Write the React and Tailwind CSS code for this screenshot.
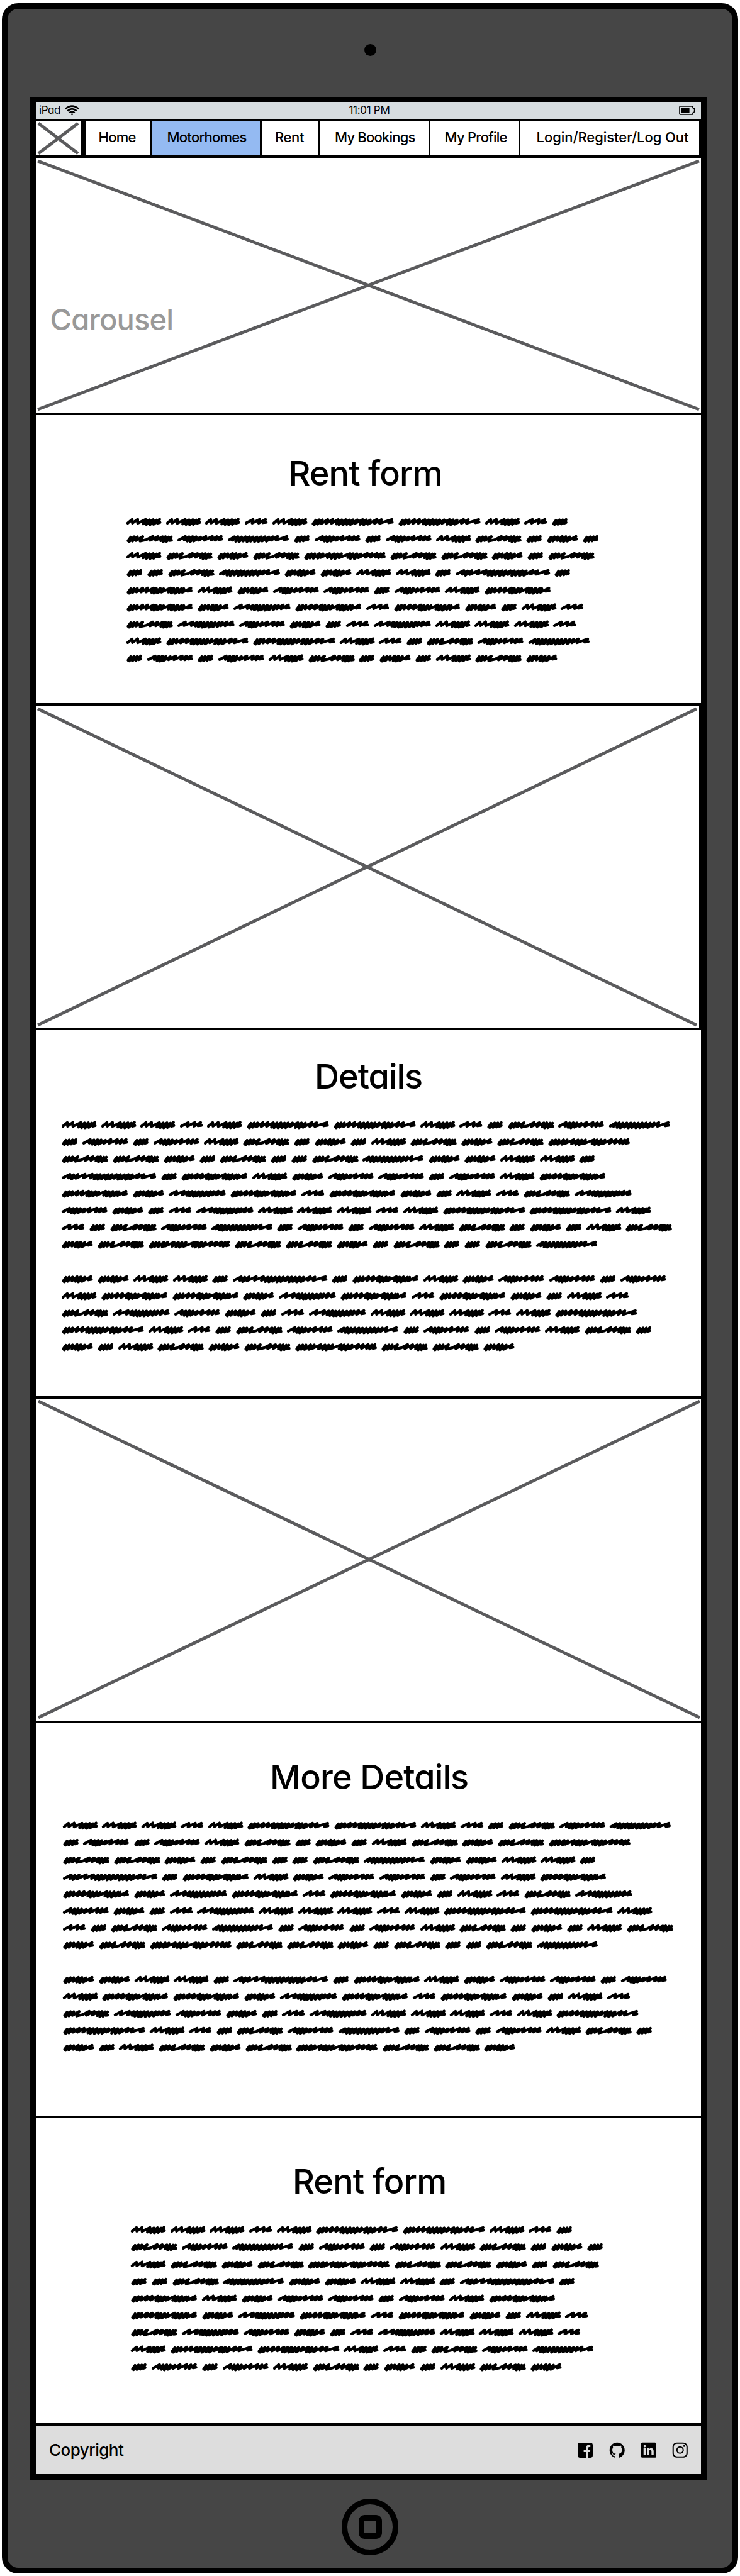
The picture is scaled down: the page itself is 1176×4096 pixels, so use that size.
import React from "react";
import { IoLogoGithub, IoLogoLinkedin, IoLogoInstagram } from "react-icons/io5";

// Scribbled words: [advance width, pen path], drawn on a 44-unit-high line.
const WORDS = {
  a: [114, "9,31 23,11 15,35 42,9 33,34 60,9 52,32 79,7 68,28 79,24"],
  b: [153, "7,27 46,7 41,27 82,7 77,27 115,7 100,25 119,23"],
  c: [218, "7,27 31,7 33,27 62,6 62,28 106,7 92,32 127,9 110,35 148,8 130,36 167,10 150,34 184,6 172,27 186,24"],
  d: [199, "9,31 23,11 15,36 42,9 33,33 60,9 57,30 86,7 76,33 106,8 92,36 128,10 112,33 162,7 148,25 165,22"],
  e: [282, "9,31 23,11 15,36 42,9 33,33 60,9 52,30 90,8 76,33 108,26 146,7 130,29 174,8 162,28 200,9 190,31 216,8 204,36 234,10 222,35 248,10 238,30 250,28"],
  f: [280, "7,27 44,7 38,27 64,9 54,33 84,8 70,36 104,9 90,33 128,11 118,28 158,7 148,28 194,7 186,27 218,8 208,28 243,7 230,25 246,22"],
  g: [365, "7,27 36,9 24,28 56,8 44,34 76,10 62,36 98,9 84,33 120,9 106,36 140,10 126,34 162,10 148,36 184,9 170,35 206,9 190,33 228,10 214,34 250,9 240,28 276,7 268,28 328,7 312,25 331,22"],
  h: [394, "9,31 23,11 15,36 42,9 33,33 60,9 55,29 90,7 80,29 118,7 108,29 150,7 138,31 166,10 152,36 188,9 172,34 206,11 194,30 244,7 232,30 262,9 248,35 284,8 268,36 306,10 292,32 318,10 310,31 357,7 340,25 359,22"],
  i: [342, "7,27 44,7 36,27 86,7 76,27 110,9 100,30 130,8 116,34 148,10 136,36 168,9 152,35 188,9 174,36 210,10 196,34 232,9 220,33 250,9 240,28 276,7 264,28 305,7 292,25 309,22"],
  j: [481, "9,31 23,11 15,36 42,9 33,33 60,9 55,29 90,7 80,29 118,7 110,28 148,8 138,32 168,9 152,35 190,8 174,36 210,10 196,34 230,9 216,35 254,9 242,28 284,8 270,34 304,9 290,36 326,10 312,33 362,7 350,28 388,8 378,28 446,7 428,25 448,22"],
  k: [550, "7,27 46,8 38,28 66,10 54,34 90,8 78,30 130,7 120,27 170,7 158,28 194,10 180,34 214,9 200,36 236,10 220,33 258,9 244,36 280,9 266,34 304,9 290,30 326,9 312,36 348,10 332,34 370,9 354,36 392,10 378,34 430,7 416,27 456,9 446,28 514,7 498,25 517,22"],
  l: [479, "9,31 23,11 15,36 42,9 33,33 60,9 52,34 86,8 76,33 106,9 92,30 142,8 130,31 166,9 152,34 186,10 172,36 208,9 194,31 256,8 244,30 272,9 258,35 294,9 280,36 316,10 302,31 352,7 340,28 378,8 368,28 406,7 396,28 426,9 414,31 443,7 432,28 446,25"],
};

const RENT_ROWS = [
  "cccbcjjcba",
  "efgafafceada",
  "cedeleedae",
  "aaegddccaka",
  "hcdffafch",
  "hdihbhdacb",
  "eifdabicccb",
  "cjjcbaefg",
  "afafceadaced",
];

const DETAIL_ROWS = [
  "cccbcjjcbaefg",
  "afafceadacedel",
  "eedaeaaegddcca",
  "kahcdffafch",
  "hdihbhdacbei",
  "fdabicccbcjjc",
  "baefgafafceadace",
  "deleedaeaaeg",
  "",
  "ddccakahcdffaf",
  "chhdihbhdacb",
  "eifdabicccbcj",
  "jcbaefgafafcea",
  "dacedeleed",
];

const UNIT = 0.28657;

function Word({ kind }) {
  const [advance, points] = WORDS[kind];
  return (
    <svg
      className="block shrink-0 overflow-visible"
      width={advance * UNIT}
      height={44 * UNIT}
      viewBox={`0 0 ${advance} 44`}
    >
      <polyline
        points={points}
        fill="none"
        stroke="#000"
        strokeWidth="15.5"
        strokeLinecap="round"
        strokeLinejoin="round"
      />
    </svg>
  );
}

function Scribble({ rows }) {
  return (
    <div className="mt-[44.2px]">
      {rows.map((row, i) => (
        <div key={i} className="flex h-[27.18px] items-start">
          {row.split("").map((kind, j) => (
            <Word key={j} kind={kind} />
          ))}
        </div>
      ))}
    </div>
  );
}

function Heading({ className, children }) {
  return (
    <h2 className={`h-[54px] text-[54px] leading-[54px] font-medium whitespace-nowrap ${className}`}>
      {children}
    </h2>
  );
}

function Cross({ x1, x2, y1, y2, width }) {
  return (
    <svg className="block h-full w-full">
      <g stroke="#5b5b5d" strokeWidth={width}>
        <line x1={x1} y1={y1} x2={x2} y2={y2} />
        <line x1={x2} y1={y1} x2={x1} y2={y2} />
      </g>
    </svg>
  );
}

const NAV = [
  ["Home", "w-[108px] border-l-2 pl-[20.5px] tracking-[-0.75px]"],
  ["Motorhomes", "w-[174px] bg-[#94baf2] pl-[23.5px] tracking-[-0.75px]"],
  ["Rent", "w-[93px] pl-[21px] tracking-[-0.4px]"],
  ["My Bookings", "w-[175px] pl-[23px] tracking-[-0.8px]"],
  ["My Profile", "w-[143px] pl-[22.5px] tracking-[-0.75px]"],
  ["Login/Register/Log Out", "w-[287px] pl-[25.5px] tracking-[-0.05px]"],
];

function WifiIcon() {
  return (
    <svg className="ml-[7px] block" width="23" height="17" viewBox="0 0 23 17">
      <g fill="none" stroke="#000" strokeWidth="2.8">
        <path d="M1 6.2 Q11.5 -3 22 6.2" />
        <path d="M4.3 9.4 Q11.5 2.8 18.7 9.4" />
        <path d="M7.5 12.4 Q11.5 8.8 15.5 12.4" />
      </g>
      <path d="M9.3 14.2 Q11.5 12.6 13.7 14.2 L11.5 16.8 Z" />
    </svg>
  );
}

function BatteryIcon() {
  return (
    <svg className="block" width="26" height="15" viewBox="0 0 26 15">
      <path
        d="M2 1 H21.5 L22.5 4 L24.6 4.6 V10 L22.5 10.8 L21.5 14 H2 Q1 14 1 13 V2 Q1 1 2 1 Z"
        fill="none"
        stroke="#000"
        strokeWidth="1.6"
      />
      <rect x="3.2" y="3.2" width="13.4" height="8.6" />
    </svg>
  );
}

function FacebookIcon() {
  return (
    <svg className="block" width="24" height="24" viewBox="0 0 24 24">
      <rect width="24" height="24" rx="4" />
      <path
        d="M13.1 24 V15 H9.6 V11.4 H13.1 V8.4 Q13.1 3.7 17.6 3.7 H20.2 V7.1 H18.2 Q16.6 7.1 16.6 8.7 V11.4 H20.2 L19.7 15 H16.6 V24 Z"
        fill="#ddd"
      />
    </svg>
  );
}

export default function App() {
  return (
    <div className="h-[4096px] w-[1176px] overflow-hidden bg-white pt-[5px] pl-[3px] font-['Inter',sans-serif] text-black [font-feature-settings:'cv11']">
      <div className="flex h-[4087px] w-[1170px] flex-col items-center rounded-[26px] border-[9px] border-black bg-[#464646]">
        <div className="mt-[56px] h-[19px] w-[19px] shrink-0 rounded-full bg-black" />

        <div className="mt-[65px] mr-[5px] h-[3790px] w-[1075px] shrink-0 border-x-[9px] border-t-[8px] border-b-[10px] border-black bg-white">
          <div className="grid h-[30px] grid-cols-3 items-center border-b-[3px] border-black bg-[#d7dde0] text-[17px] leading-none">
            <div className="flex items-center pl-[5px] tracking-[-0.4px]">
              iPad
              <WifiIcon />
            </div>
            <div className="pl-[3px] text-center tracking-[-0.3px]">11:01 PM</div>
            <div className="flex justify-end pr-[9px]">
              <BatteryIcon />
            </div>
          </div>

          <nav className="flex h-[60px] border-b-[5px] border-black text-[22px] leading-none font-medium">
            <div className="mr-px w-[76px] border-r-[5px] border-black">
              <Cross x1={4} y1={4} x2={67} y2={52} width={5} />
            </div>
            {NAV.map(([label, cls]) => (
              <div
                key={label}
                className={`flex shrink-0 items-center border-r-[3px] border-black pb-[3px] whitespace-nowrap ${cls}`}
              >
                {label}
              </div>
            ))}
          </nav>

          <section className="relative h-[408px] border-b-4 border-black">
            <Cross x1={3} y1={4} x2={1054} y2={399} width={5} />
            <div className="absolute top-[232px] left-[22.5px] text-[47px] leading-none font-medium tracking-[-0.8px] text-[#999]">
              Carousel
            </div>
          </section>

          <section className="h-[462px] border-b-4 border-black pt-[65.7px] pl-[144.4px]">
            <Heading className="pl-[257px] tracking-[-0.9px]">Rent form</Heading>
            <Scribble rows={RENT_ROWS} />
          </section>

          <section className="h-[516px] border-r-[3px] border-b-4 border-black">
            <Cross x1={3} y1={5} x2={1050} y2={508} width={5} />
          </section>

          <section className="h-[586px] border-b-4 border-black pt-[46.8px] pl-[41.2px]">
            <Heading className="pl-[401.8px] tracking-[-1px]">Details</Heading>
            <Scribble rows={DETAIL_ROWS} />
          </section>

          <section className="h-[516px] border-b-4 border-black">
            <Cross x1={4} y1={4} x2={1055} y2={507} width={5} />
          </section>

          <section className="h-[628px] border-b-4 border-black pt-[59px] pl-[42.7px]">
            <Heading className="pl-[329.3px] tracking-[-0.9px]">More Details</Heading>
            <Scribble rows={DETAIL_ROWS} />
          </section>

          <section className="h-[489px] border-b-4 border-black pt-[74px] pl-[151.3px]">
            <Heading className="pl-[256.7px] tracking-[-0.9px]">Rent form</Heading>
            <Scribble rows={RENT_ROWS} />
          </section>

          <footer className="flex h-[77px] items-center justify-between bg-[#ddd] pr-[22px] pl-[21px]">
            <div className="text-[26px] leading-none font-medium tracking-[-0.5px]">Copyright</div>
            <div className="flex w-[174px] items-center justify-between">
              <FacebookIcon />
              <IoLogoGithub className="-mx-[2px]" size={27.5} />
              <IoLogoLinkedin className="-mx-[2px]" size={27.5} />
              <IoLogoInstagram className="-mx-[2px]" size={27.5} />
            </div>
          </footer>
        </div>

        <div className="mt-[29px] flex h-[90px] w-[90px] shrink-0 items-center justify-center rounded-full border-[9px] border-black">
          <div className="h-[38px] w-[37px] rounded-[9px] border-[9px] border-black" />
        </div>
      </div>
    </div>
  );
}
